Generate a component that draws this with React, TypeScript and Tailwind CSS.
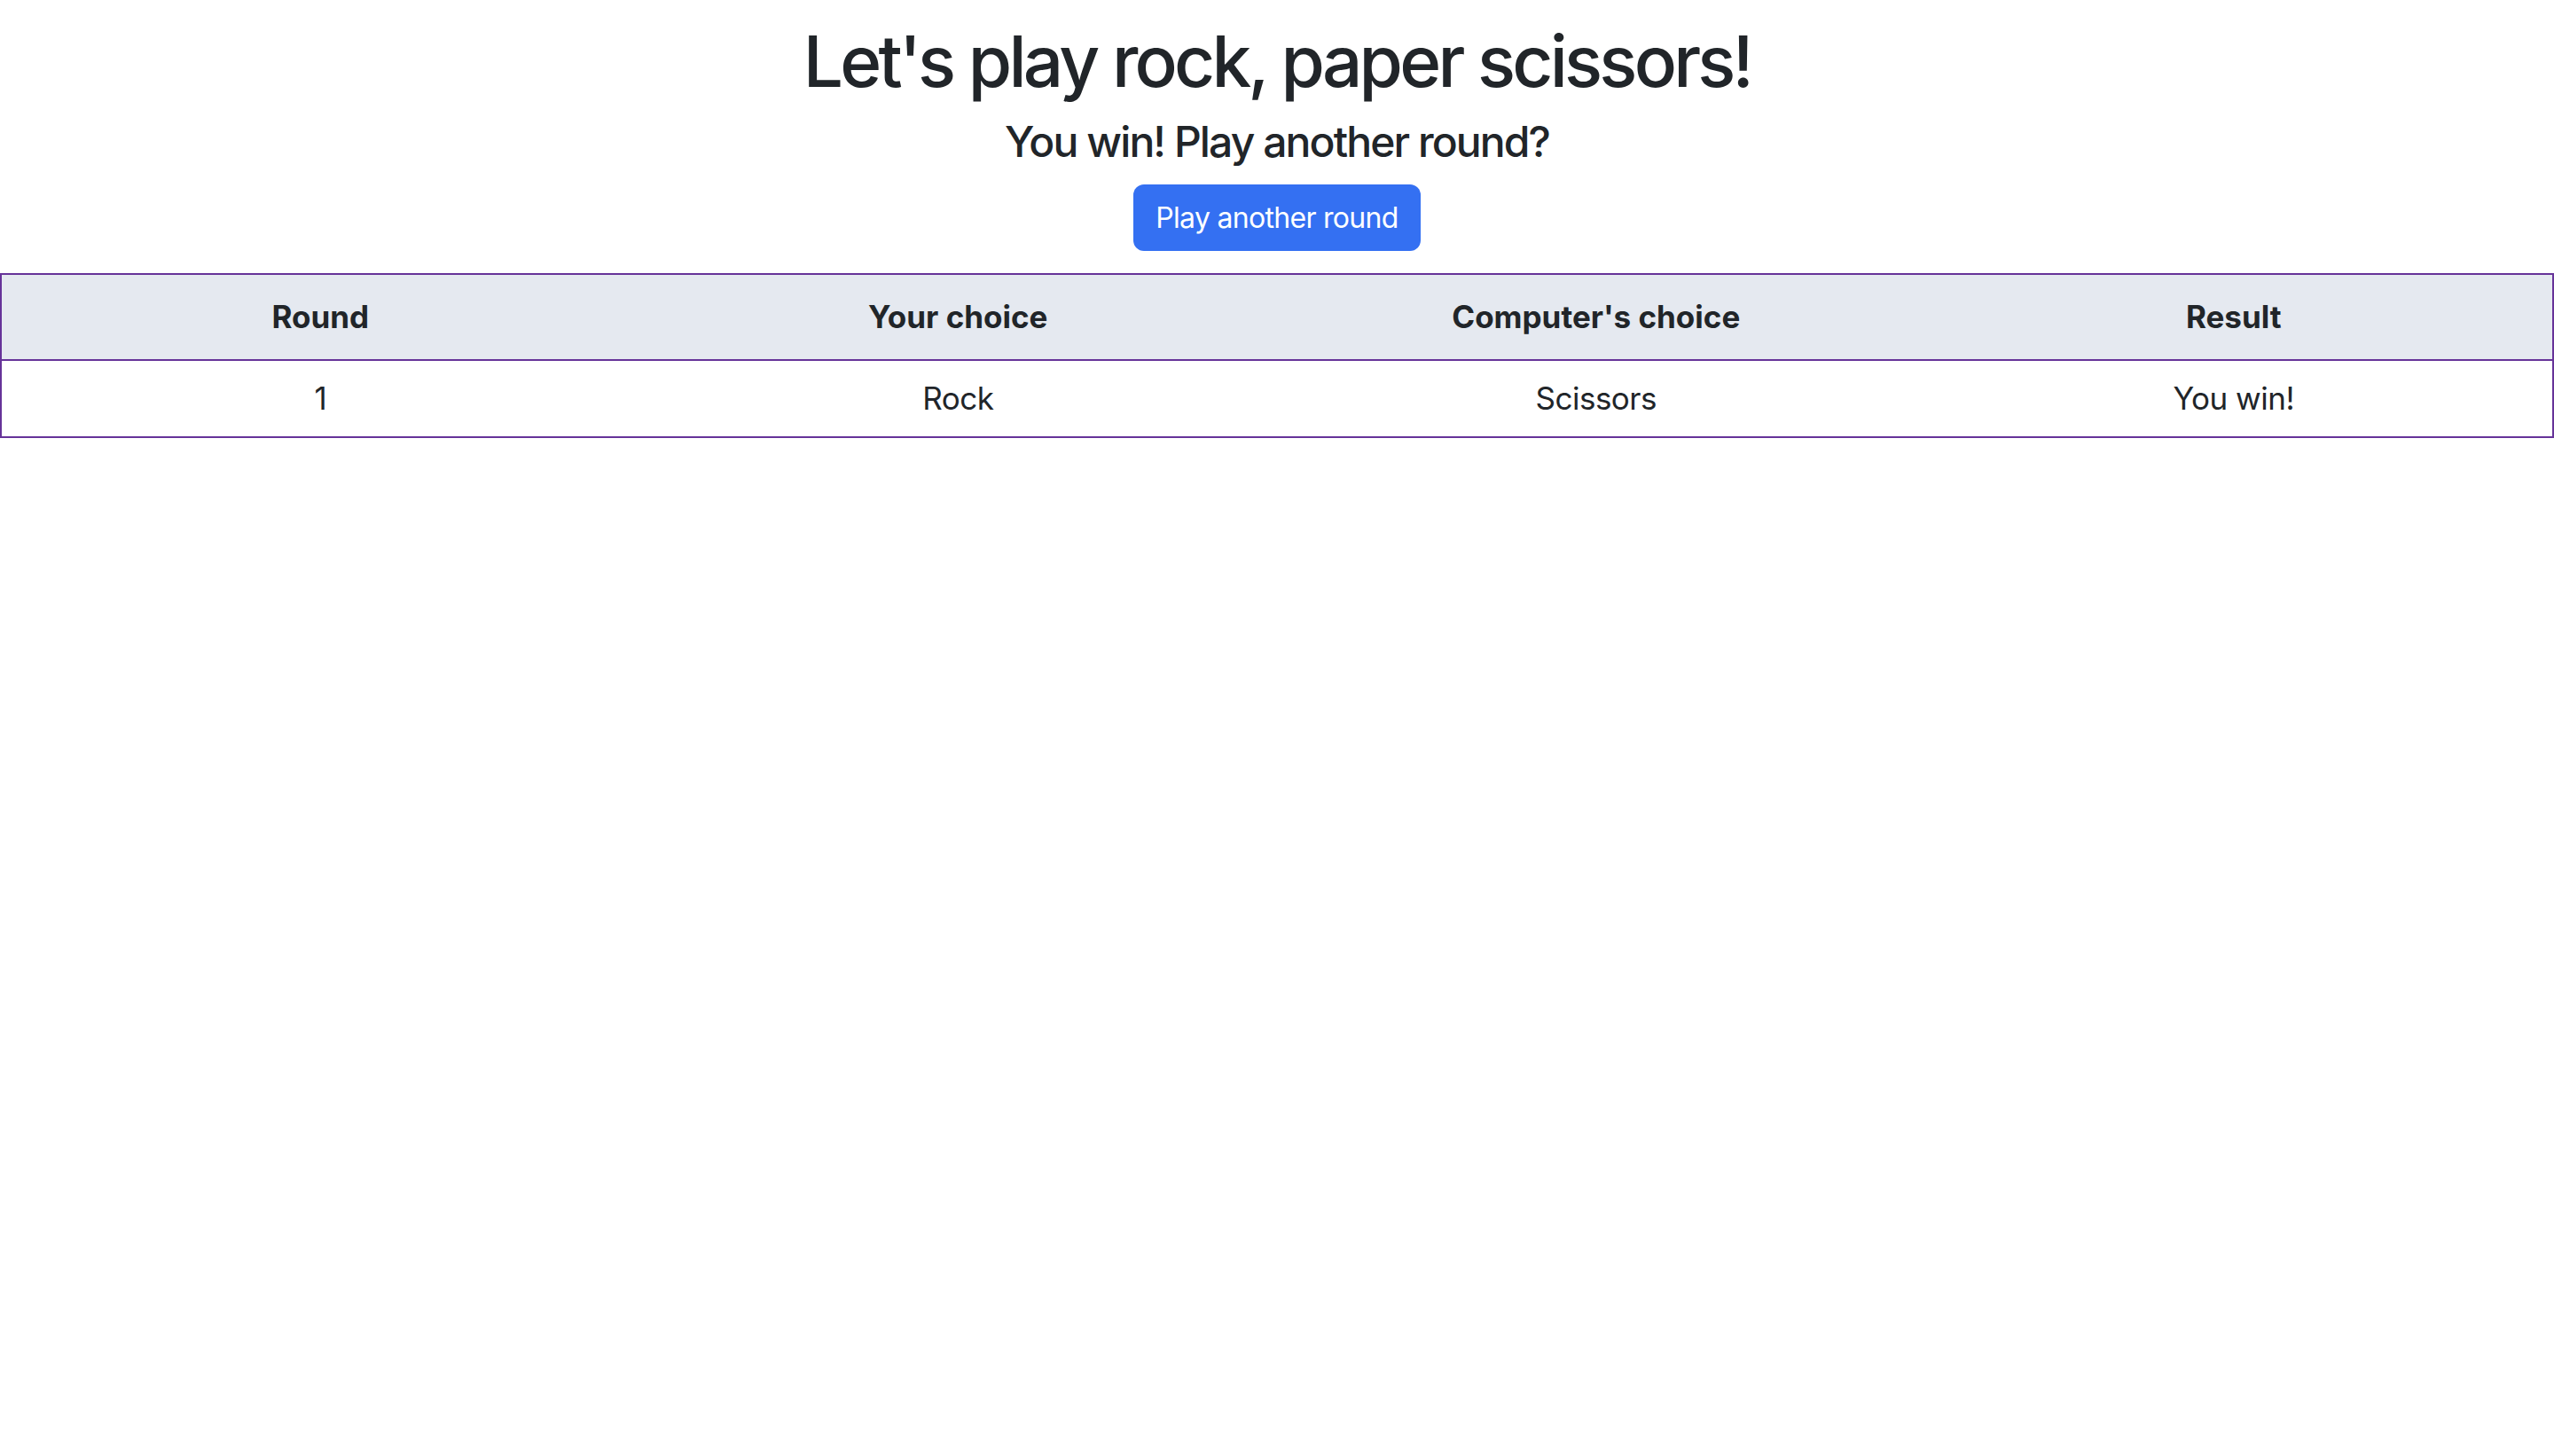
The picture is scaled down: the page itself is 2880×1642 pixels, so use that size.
const rounds = [{ round: 1, you: "Rock", computer: "Scissors", result: "You win!" }];

const App = () => {
  return (
    <div className="min-h-screen bg-white text-[#212529] font-['Inter','Liberation_Sans',sans-serif]">
      <div className="flex flex-col items-center pt-[21px]">
        <h1 className="text-[80px] leading-[96px] font-medium tracking-[-3.8px]">
          Let's play rock, paper scissors!
        </h1>
        <h4 className="mt-[14px] text-[48px] leading-[58px] font-medium tracking-[-1.9px]">
          You win! Play another round?
        </h4>
        <button className="mt-[19px] h-[75px] px-[25px] rounded-[12px] bg-[#3470f2] text-white text-[32px] leading-none tracking-[-0.7px]">
          Play another round
        </button>
      </div>

      <table className="mt-[25px] w-full table-fixed border-collapse border-2 border-[#663399] text-[35px]">
        <thead>
          <tr className="bg-[#e5e9f0] h-[97px]">
            <th className="font-bold border-b-2 border-[#663399]">Round</th>
            <th className="font-bold border-b-2 border-[#663399]">Your choice</th>
            <th className="font-bold border-b-2 border-[#663399]">Computer's choice</th>
            <th className="font-bold border-b-2 border-[#663399]">Result</th>
          </tr>
        </thead>
        <tbody>
          {rounds.map((r) => (
            <tr key={r.round} className="h-[87px] text-center tracking-[-0.5px]">
              <td>{r.round}</td>
              <td>{r.you}</td>
              <td>{r.computer}</td>
              <td>{r.result}</td>
            </tr>
          ))}
        </tbody>
      </table>
    </div>
  );
};

export default App;
